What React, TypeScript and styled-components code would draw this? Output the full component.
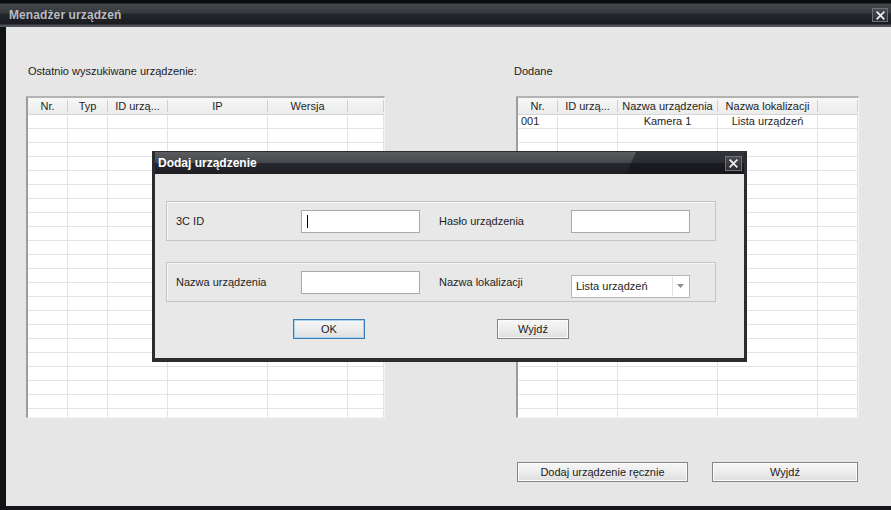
import styled, { createGlobalStyle } from 'styled-components';

const GlobalStyle = createGlobalStyle`
    html, body{
        margin : 0;
        padding : 0;
        background : #121417;
    }
    body{
        font-family : "Liberation Sans", Arial, sans-serif;
        font-size : 11px;
        color : #1e1e1e;
    }
`;

const Window = styled.div`
    position : relative;
    width : 891px;
    height : 510px;
    display : flex;
    flex-direction : column;
    overflow : hidden;
    background : #101216;
`;

const TitleBar = styled.div`
    height : 27px;
    flex-shrink : 0;
    display : flex;
    align-items : center;
    justify-content : space-between;
    padding : 3px 3px 0 9px;
    box-sizing : border-box;
    background : linear-gradient(to bottom,
        #0c0d10 0, #0c0d10 3px,
        #44474c 4px, #36393e 13px,
        #23262c 14px, #1a1c21 24px,
        #4b4e53 25px, #55585c 27px);

    .title{
        font-size : 12px;
        font-weight : bold;
        color : #b9bcc1;
        letter-spacing : 0.1px;
    }
`;

const CloseBtn = styled.div<{ $size: number }>`
    width : ${p => p.$size}px;
    height : ${p => p.$size - 2}px;
    box-sizing : border-box;
    border : 1px solid #6e7176;
    background : linear-gradient(#4a4c51, #2b2d32);
    display : flex;
    align-items : center;
    justify-content : center;
`;

const Body = styled.div`
    flex : 1;
    margin-left : 6px;
    background : #e6e6e6;
    border-bottom : 4px solid #15171b;
    display : flex;
    padding : 38px 0 0 20px;
    gap : 131px;
`;

const Column = styled.div<{ $width: number }>`
    width : ${p => p.$width}px;
    display : flex;
    flex-direction : column;
`;

const Caption = styled.div<{ $indent?: number }>`
    height : 13px;
    line-height : 13px;
    margin-left : ${p => p.$indent || 0}px;
    margin-bottom : 18px;
    color : #222;
`;

const Table = styled.div`
    height : 322px;
    box-sizing : border-box;
    border-top : 2px solid #b3b3b3;
    border-left : 2px solid #9d9d9d;
    border-right : 1px solid #f4f4f4;
    border-bottom : 1px solid #f4f4f4;
    background : #ffffff;
    overflow : hidden;
`;

const Row = styled.div<{ $cols: string; $head?: boolean }>`
    display : grid;
    grid-template-columns : ${p => p.$cols};
    height : ${p => (p.$head ? 17 : 14)}px;
    background : ${p => (p.$head ? 'linear-gradient(#f7f7f7, #ececec)' : '#ffffff')};
    border-bottom : 1px solid ${p => (p.$head ? '#d6d6d6' : '#e4e4e4')};
    box-sizing : border-box;
`;

const Cell = styled.div<{ $align?: string; $head?: boolean }>`
    border-right : 1px solid ${p => (p.$head ? '#cfcfcf' : '#e4e4e4')};
    text-align : ${p => p.$align || 'center'};
    padding : 0 3px;
    line-height : ${p => (p.$head ? 16 : 13)}px;
    white-space : nowrap;
    overflow : hidden;
    color : #1e1e1e;
    ${p => p.$head && 'margin : 2px 0; line-height : 12px;'}
`;

const ButtonRow = styled.div`
    margin-top : 44px;
    display : flex;
    gap : 24px;
    padding-left : 1px;
`;

const Button = styled.div<{ $width: number; $focused?: boolean }>`
    width : ${p => p.$width}px;
    height : 20px;
    box-sizing : border-box;
    border : 1px solid ${p => (p.$focused ? '#3a7cb5' : '#858585')};
    box-shadow : inset 0 0 0 1px ${p => (p.$focused ? '#a9d2f0' : '#fbfbfb')};
    background : linear-gradient(#f6f6f6 0, #ededed 50%, #dedede 100%);
    display : flex;
    align-items : center;
    justify-content : center;
    color : #1a1a1a;
`;

const Dialog = styled.div`
    position : absolute;
    left : 152px;
    top : 151px;
    width : 595px;
    height : 211px;
    box-sizing : border-box;
    border : 3px solid #2b2d31;
    border-top : 1px solid #2b2d31;
    border-bottom-width : 4px;
    background : #e8e8e8;
    display : flex;
    flex-direction : column;
`;

const DialogBar = styled.div`
    position : relative;
    height : 22px;
    flex-shrink : 0;
    display : flex;
    align-items : center;
    justify-content : space-between;
    padding : 0 2px 0 3px;
    background : linear-gradient(#5a5c60 0, #45474b 50%, #26282d 51%, #1c1e23 100%);
    overflow : hidden;

    &::before{
        content : '';
        position : absolute;
        top : 0;
        right : 0;
        bottom : 0;
        width : 118px;
        clip-path : polygon(10px 0, 100% 0, 100% 100%, 0 100%);
        background : linear-gradient(#34363b 0, #2a2c31 50%, #1a1c21 51%, #15171b 100%);
    }

    .title{
        position : relative;
        font-size : 12px;
        font-weight : bold;
        color : #ffffff;
    }
    & > div{
        position : relative;
    }
`;

const DialogBody = styled.div`
    flex : 1;
    padding : 27px 0 0 11px;
    display : flex;
    flex-direction : column;
    gap : 21px;
`;

const Group = styled.div`
    width : 550px;
    height : 40px;
    box-sizing : border-box;
    border : 1px solid #c4c4c4;
    box-shadow : inset 1px 1px 0 #f7f7f7;
    display : flex;
    align-items : center;
    padding-left : 9px;
`;

const Label = styled.div<{ $width: number }>`
    width : ${p => p.$width}px;
    flex-shrink : 0;
    color : #1e1e1e;
`;

const Field = styled.div`
    width : 119px;
    height : 23px;
    box-sizing : border-box;
    border : 1px solid #a9a9a9;
    background : #ffffff;
    display : flex;
    align-items : center;
    padding-left : 5px;
`;

const Caret = styled.span`
    width : 1px;
    height : 13px;
    background : #000000;
`;

const Spacer = styled.div<{ $width: number }>`
    width : ${p => p.$width}px;
    flex-shrink : 0;
`;

const Select = styled.div`
    width : 119px;
    height : 23px;
    margin-top : 8px;
    box-sizing : border-box;
    border : 1px solid #b5b5b5;
    background : #ffffff;
    display : flex;
    align-items : center;
    justify-content : space-between;
    padding-left : 4px;

    .arrow{
        width : 15px;
        height : 19px;
        margin-right : 1px;
        border-left : 1px solid #e2e2e2;
        display : flex;
        align-items : center;
        justify-content : center;
    }
`;

const DialogButtons = styled.div`
    display : flex;
    gap : 132px;
    padding-left : 127px;
    margin-top : -4px;
`;

const leftCols = [
    { title : 'Nr.', width : 40 },
    { title : 'Typ', width : 40 },
    { title : 'ID urzą...', width : 60 },
    { title : 'IP', width : 100 },
    { title : 'Wersja', width : 80 },
];

const rightCols = [
    { title : 'Nr.', width : 40 },
    { title : 'ID urzą...', width : 60 },
    { title : 'Nazwa urządzenia', width : 100 },
    { title : 'Nazwa lokalizacji', width : 100 },
];

const rightRows = [
    ['001', '', 'Kamera 1', 'Lista urządzeń'],
];

const XIcon = ({ size }: { size: number }) => (
    <svg width={size} height={size} viewBox="0 0 10 10">
        <path d="M2 2 L8 8 M8 2 L2 8" stroke="#f2f2f2" strokeWidth="1.5" strokeLinecap="square" />
    </svg>
);

type Col = { title: string; width: number };

const DataTable = ({ cols, rows }: { cols: Col[]; rows: string[][] }) => {
    const template = cols.map(c => `${c.width}px`).join(' ') + ' 1fr';
    const all = Array.from({ length: 23 }, (_, i) => rows[i] || []);
    return (
        <Table>
            <Row $cols={template} $head>
                {cols.map(c => <Cell key={c.title} $head>{c.title}</Cell>)}
                <Cell $head />
            </Row>
            {all.map((r, i) => (
                <Row key={i} $cols={template}>
                    {cols.map((c, j) => (
                        <Cell key={c.title} $align={j === 0 ? 'left' : 'center'}>{r[j] || ''}</Cell>
                    ))}
                    <Cell />
                </Row>
            ))}
        </Table>
    );
};

const App = () => {
    return (
        <>
            <GlobalStyle />
            <Window>
                <TitleBar>
                    <span className="title">Menadżer urządzeń</span>
                    <CloseBtn $size={16}><XIcon size={11} /></CloseBtn>
                </TitleBar>
                <Body>
                    <Column $width={359}>
                        <Caption $indent={2}>Ostatnio wyszukiwane urządzenie:</Caption>
                        <DataTable cols={leftCols} rows={[]} />
                    </Column>
                    <Column $width={343}>
                        <Caption $indent={-2}>Dodane</Caption>
                        <DataTable cols={rightCols} rows={rightRows} />
                        <ButtonRow>
                            <Button $width={171}>Dodaj urządzenie ręcznie</Button>
                            <Button $width={146}>Wyjdź</Button>
                        </ButtonRow>
                    </Column>
                </Body>

                <Dialog>
                    <DialogBar>
                        <span className="title">Dodaj urządzenie</span>
                        <CloseBtn $size={17}><XIcon size={11} /></CloseBtn>
                    </DialogBar>
                    <DialogBody>
                        <Group>
                            <Label $width={125}>3C ID</Label>
                            <Field><Caret /></Field>
                            <Spacer $width={19} />
                            <Label $width={132}>Hasło urządzenia</Label>
                            <Field />
                        </Group>
                        <Group>
                            <Label $width={125}>Nazwa urządzenia</Label>
                            <Field />
                            <Spacer $width={19} />
                            <Label $width={132}>Nazwa lokalizacji</Label>
                            <Select>
                                <span>Lista urządzeń</span>
                                <div className="arrow">
                                    <svg width="7" height="4" viewBox="0 0 7 4">
                                        <polygon points="0,0 7,0 3.5,4" fill="#8f8f8f" />
                                    </svg>
                                </div>
                            </Select>
                        </Group>
                        <DialogButtons>
                            <Button $width={72} $focused>OK</Button>
                            <Button $width={72}>Wyjdź</Button>
                        </DialogButtons>
                    </DialogBody>
                </Dialog>
            </Window>
        </>
    );
};

export default App;
